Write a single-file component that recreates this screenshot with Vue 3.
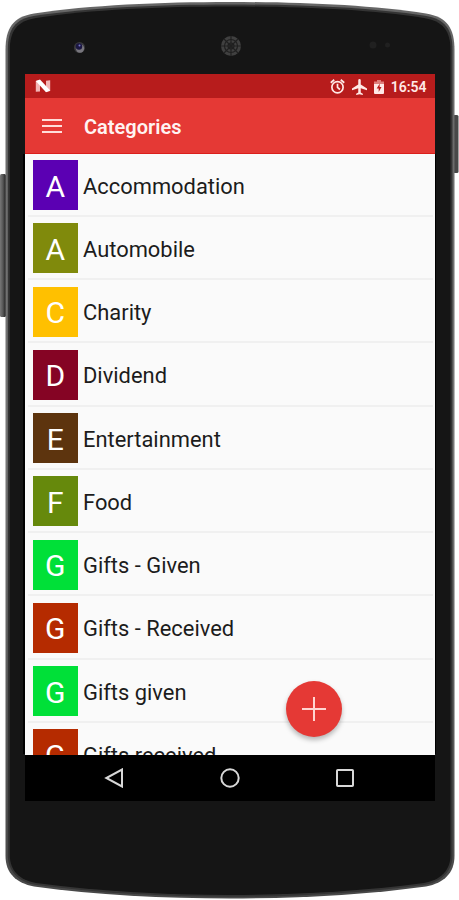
<template>
  <div class="stage">
    <svg class="phone-frame" viewBox="0 0 459 900" aria-hidden="true">
      <defs>
        <linearGradient id="sideKey" x1="0" x2="1" y1="0" y2="0">
          <stop offset="0" stop-color="#777777" />
          <stop offset="0.5" stop-color="#555555" />
          <stop offset="1" stop-color="#1c1c1c" />
        </linearGradient>
        <linearGradient id="rim" x1="0" x2="0" y1="0" y2="1">
          <stop offset="0" stop-color="#666666" />
          <stop offset="0.5" stop-color="#777777" />
          <stop offset="1" stop-color="#484848" />
        </linearGradient>
      </defs>
      <rect x="0" y="174" width="6" height="143" rx="1.5" fill="url(#sideKey)" />
      <rect x="453" y="115" width="5.5" height="58" rx="1.5" fill="#484848" />
      <path
        d="M5.500 50C5.500 28 13 17 34 13.500C90 5 160 2 230 2S370 5 426 13.500C447 17 454.500 28 454.500 50V856C454.500 873 444 883 426 886.500C365 895 295 898.500 230 898.500S95 895 34 886.500C16 883 5.500 873 5.500 856Z"
        fill="url(#rim)"
      />
      <path
        d="M7.800 50C7.800 29 15 19 35 15.800C91 7.500 160 4.500 230 4.500S369 7.500 425 15.800C445 19 452.500 29 452.500 50V855C452.500 871 442 881.500 425 884.800C365 893 295 896.800 230 896.800S95 893 35 884.800C18 881.500 7.800 871 7.800 855Z"
        fill="#343434"
      />
      <path
        d="M9.800 50C9.800 31 17 21 36 18C91 9.500 160 6.500 230 6.500S369 9.500 424 18C443 21 450.500 31 450.500 50V855C450.500 870 441 880 424 883C365 891 295 895 230 895S95 891 36 883C19 880 9.800 870 9.800 855Z"
        fill="#151515"
      />
      <path d="M24 154V754M435 154V754" stroke="#000" stroke-width="2" />
      <circle cx="79.500" cy="47.500" r="5.500" fill="#39393c" />
      <circle cx="80" cy="48.500" r="4.200" fill="#77757c" />
      <circle cx="79" cy="46.500" r="3.200" fill="#1b1742" />
      <circle cx="79.500" cy="45.500" r="1" fill="#7774c8" />
      <circle cx="231" cy="46" r="10" fill="#404040" />
      <g fill="none" stroke="#202020" stroke-width="1.200">
        <circle cx="231" cy="46" r="3" />
        <circle cx="231" cy="46" r="6.500" />
        <path d="M231 36V56M221 46H241M224 39L238 53M238 39L224 53" />
      </g>
      <circle cx="373" cy="45" r="3.500" fill="#202020" />
      <circle cx="387.500" cy="45" r="2.500" fill="#202020" />
    </svg>

    <main class="screen">
      <div class="status-bar">
        <svg class="n-logo" viewBox="0 0 16 14">
          <path d="M.8 2L5 1V12.500L.8 12.800ZM11 1.800L15.200 1.200V12L11 13Z" fill="#f2b5b5" />
          <path d="M.8 2L5 .5L15.200 11.500L11 13.200Z" fill="#fff" />
        </svg>
        <div class="status-icons">
          <svg class="alarm" viewBox="0 0 16 16" fill="none" stroke="#ffe9e7" stroke-width="1.800">
            <circle cx="8" cy="8.800" r="6" />
            <path d="M.8 4L4.500 .8M15.200 4L11.500 .8M8 5V9L10.600 11.200" />
          </svg>
          <svg class="plane" viewBox="3 2 18 20" preserveAspectRatio="none">
            <path d="M21 16v-2l-7.500-5V3.500a1.500 1.500 0 0 0-3 0V9L3 14v2l7.500-2.300V19L8 20.500V22l4-1 4 1v-1.500L13.500 19v-5.300Z" fill="#ffe9e7" />
          </svg>
          <svg class="battery" viewBox="0 0 10 14">
            <path d="M3 0H7V1.500H10V5H0V1.500H3Z" fill="#e07f7c" />
            <path d="M0 4H10V13Q10 14 9 14H1Q0 14 0 13Z" fill="#ffe9e7" />
            <path d="M5.800 3.500L2.700 8.500H4.700V12L7.500 7H5.600Z" fill="#b71c1c" />
          </svg>
          <span class="clock">16:54</span>
        </div>
      </div>

      <header class="toolbar">
        <button class="menu-btn" aria-label="Menu">
          <span></span>
          <span></span>
          <span></span>
        </button>
        <h1>Categories</h1>
      </header>

      <ul class="category-list">
        <li v-for="category in categories" :key="category.name" class="category">
          <span class="tile" :style="{ background: category.color }">{{ category.name[0] }}</span>
          <span class="name">{{ category.name }}</span>
        </li>
      </ul>

      <button class="fab" aria-label="Add">
        <svg viewBox="0 0 24 24"><path d="M12 0V24M0 12H24" stroke="#ffd5d1" stroke-width="2" /></svg>
      </button>

      <nav class="nav-bar">
        <svg viewBox="0 0 20 20"><path d="M18 1.500V18.500L2.300 10Z" /></svg>
        <svg viewBox="0 0 20 20"><circle cx="10" cy="10" r="8.700" /></svg>
        <svg viewBox="0 0 20 20"><rect x="2" y="2" width="16" height="16" rx="0.800" /></svg>
      </nav>
    </main>
  </div>
</template>

<script setup>
const categories = [
  { name: 'Accommodation', color: '#5b00b3' },
  { name: 'Automobile', color: '#808a0c' },
  { name: 'Charity', color: '#ffc000' },
  { name: 'Dividend', color: '#850424' },
  { name: 'Entertainment', color: '#5d340e' },
  { name: 'Food', color: '#66890c' },
  { name: 'Gifts - Given', color: '#00e038' },
  { name: 'Gifts - Received', color: '#b52b00' },
  { name: 'Gifts given', color: '#00e038' },
  { name: 'Gifts received', color: '#b52b00' }
]
</script>

<style>
body {
  margin: 0;
  background: #ffffff;
}
</style>

<style scoped>
.stage {
  position: relative;
  width: 459px;
  height: 900px;
  overflow: hidden;
  box-sizing: border-box;
  padding: 74px 24.5px 99px;
  font-family: Roboto, "Liberation Sans", sans-serif;
}

.phone-frame {
  position: absolute;
  inset: 0;
  width: 459px;
  height: 900px;
}

.screen {
  position: relative;
  display: flex;
  flex-direction: column;
  width: 410px;
  height: 727px;
  overflow: hidden;
  background: #fafafa;
}

.status-bar {
  flex: none;
  height: 24px;
  box-sizing: border-box;
  display: flex;
  align-items: center;
  justify-content: space-between;
  padding: 1px 8px 0 10px;
  background: #b71c1c;
}

.n-logo {
  width: 16px;
  height: 14px;
  margin-top: -1px;
}

.status-icons {
  display: flex;
  align-items: center;
}

.alarm {
  width: 15px;
  height: 15px;
  margin-right: 7px;
}

.plane {
  width: 15px;
  height: 16px;
  margin-right: 7px;
}

.battery {
  width: 10px;
  height: 14px;
  margin-right: 7px;
}

.clock {
  color: #ffe9e7;
  font-size: 14px;
  font-weight: 600;
  line-height: 22px;
}

.toolbar {
  flex: none;
  height: 55.5px;
  box-sizing: border-box;
  display: flex;
  align-items: center;
  padding: 2px 0 0 17.5px;
  background: #e53935;
  border-bottom: 1px solid #db1f1b;
}

.menu-btn {
  width: 20px;
  padding: 0;
  border: none;
  background: none;
  display: flex;
  flex-direction: column;
  gap: 4px;
  margin: -1px 22px 0 0;
}

.menu-btn span {
  height: 2px;
  background: #ffdeda;
}

.toolbar h1 {
  margin: 2px 0 0;
  color: #fff3f2;
  font-size: 20px;
  font-weight: 600;
  line-height: 26px;
}

.category-list {
  flex: 1;
  min-height: 0;
  overflow: hidden;
  margin: 0;
  padding: 0 2px 0 3.5px;
  list-style: none;
}

.category {
  height: 63.25px;
  box-sizing: border-box;
  display: flex;
  align-items: center;
  padding-left: 5px;
  border-bottom: 2px solid #f0f0f0;
}

.tile {
  width: 44.5px;
  height: 50px;
  box-sizing: border-box;
  margin: 2px 5px 0 0;
  padding-top: 3px;
  display: flex;
  align-items: center;
  justify-content: center;
  color: #ffffff;
  font-size: 30px;
  line-height: 50px;
}

.name {
  color: #1c1c1c;
  font-size: 22.5px;
  line-height: 28px;
  padding-top: 3px;
  white-space: nowrap;
  transform: scaleX(0.973);
  transform-origin: left center;
}

.fab {
  position: absolute;
  left: 261.5px;
  top: 607px;
  width: 56px;
  height: 56px;
  padding: 0;
  border: none;
  border-radius: 50%;
  background: #e53935;
  display: flex;
  align-items: center;
  justify-content: center;
  box-shadow: 0 3px 5px rgba(0, 0, 0, 0.28);
}

.fab svg {
  width: 24px;
  height: 24px;
}

.nav-bar {
  flex: none;
  height: 46.5px;
  display: flex;
  align-items: center;
  justify-content: center;
  gap: 95.5px;
  background: #000000;
}

.nav-bar svg {
  width: 20px;
  height: 20px;
  fill: none;
  stroke: #d8d8d8;
  stroke-width: 2;
}
</style>
